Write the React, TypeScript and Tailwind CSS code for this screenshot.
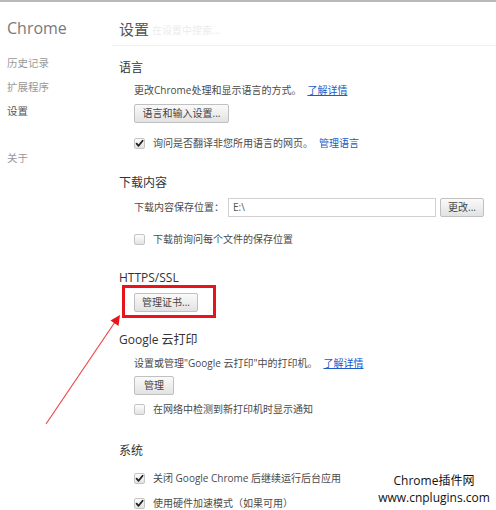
import React from "react";

const font = { fontFamily: '"Open Sans", "Noto Sans CJK SC", sans-serif' };

function Checkbox({ checked }: { checked?: boolean }) {
  return (
    <span className="relative inline-flex h-[11px] w-[11px] shrink-0 items-center justify-center rounded-[2px] border border-[#c4c4c4] bg-gradient-to-b from-[#fdfdfd] to-[#e3e3e3]">
      {checked && (
        <svg width="9" height="9" viewBox="0 0 9 9" className="absolute left-[0px] top-[0px]">
          <path d="M1.6 4.6 L3.6 6.8 L7.6 1.8" fill="none" stroke="#222" strokeWidth="1.8" strokeLinecap="round" strokeLinejoin="round" />
        </svg>
      )}
    </span>
  );
}

function Btn({ children, className = "" }: { children: React.ReactNode; className?: string }) {
  return (
    <div
      className={
        "flex h-[19px] items-center justify-center rounded-[2px] border border-[#c0c0c0] bg-gradient-to-b from-[#fafafa] to-[#e2e2e2] text-[10px] text-[#444] " +
        className
      }
    >
      {children}
    </div>
  );
}

function Title({ children, className = "" }: { children: React.ReactNode; className?: string }) {
  return <div className={"h-[16px] text-[12px] leading-[16px] text-[#333] " + className}>{children}</div>;
}

function CheckRow({ checked, children, className = "" }: { checked?: boolean; children: React.ReactNode; className?: string }) {
  return (
    <div className={"flex h-[18px] items-center gap-[8px] pl-[15px] text-[10px] text-[#4a4a4a] " + className}>
      <Checkbox checked={checked} />
      <span>{children}</span>
    </div>
  );
}

export default function App() {
  return (
    <div className="relative h-[510px] w-[496px] overflow-hidden bg-white" style={font}>
      <div className="h-[2px] bg-[#b8b8b8]" />
      <div className="flex">
        {/* sidebar */}
        <div className="w-[112px] shrink-0 pl-[7px]">
          <div className="mt-[15px] h-[22px] text-[16px] leading-[22px] text-[#7a7a7a]">Chrome</div>
          <div className="mt-[15px] h-[18px] text-[10.5px] leading-[18px] text-[#999]">历史记录</div>
          <div className="mt-[6px] h-[18px] text-[10.5px] leading-[18px] text-[#999]">扩展程序</div>
          <div className="mt-[6px] h-[18px] text-[10.5px] leading-[18px] text-[#555]">设置</div>
          <div className="mt-[29px] h-[18px] text-[10.5px] leading-[18px] text-[#999]">关于</div>
        </div>
        {/* main */}
        <div className="flex-1">
          <div className="flex h-[44px] items-start border-b border-[#efefef] pl-[7px] pt-[17px]">
            <span className="text-[15px] leading-[20px] text-[#555]">设置</span>
            <span className="ml-[3px] mt-[4px] text-[10px] leading-[14px] text-[#ececec]">在设置中搜索...</span>
          </div>
          <div className="pl-[7px]">
            <Title className="mt-[14px]">语言</Title>
            <div className="mt-[5px] flex h-[18px] items-center pl-[15px] text-[10px] text-[#4a4a4a]">
              <span>更改Chrome处理和显示语言的方式。</span>
              <span className="ml-[6px] text-[#2159c9] underline">了解详情</span>
            </div>
            <div className="mt-[5px] pl-[15px]">
              <Btn className="w-[95px]">语言和输入设置...</Btn>
            </div>
            <CheckRow checked className="mt-[11px]">
              询问是否翻译非您所用语言的网页。<span className="ml-[6px] text-[#2159c9]">管理语言</span>
            </CheckRow>

            <Title className="mt-[23px]">下载内容</Title>
            <div className="mt-[7px] flex h-[19px] items-center pl-[15px] text-[10px] text-[#4a4a4a]">
              <span className="w-[94px]">下载内容保存位置：</span>
              <div className="flex h-[19px] w-[208px] items-center border border-[#d0d0d0] pl-[4px] text-[10px] text-[#555]">E:\</div>
              <Btn className="ml-[4px] w-[44px]">更改...</Btn>
            </div>
            <CheckRow className="mt-[13px]">下载前询问每个文件的保存位置</CheckRow>

            <Title className="mt-[22px]">HTTPS/SSL</Title>
            <div className="mt-[7px] pl-[15px]">
              <div className="relative w-[64px]">
                <Btn className="w-[64px]">管理证书...</Btn>
                <div className="absolute left-[-12px] top-[-8px] h-[33px] w-[94px] border-[3px] border-[#e8141c]" />
              </div>
            </div>

            <Title className="mt-[20px]">Google 云打印</Title>
            <div className="mt-[6px] flex h-[18px] items-center pl-[15px] text-[10px] text-[#4a4a4a]">
              <span>设置或管理"Google 云打印"中的打印机。</span>
              <span className="ml-[6px] text-[#2159c9] underline">了解详情</span>
            </div>
            <div className="mt-[4px] pl-[15px]">
              <Btn className="w-[40px]">管理</Btn>
            </div>
            <CheckRow className="mt-[5px]">在网络中检测到新打印机时显示通知</CheckRow>

            <Title className="mt-[25px]">系统</Title>
            <CheckRow checked className="mt-[10px]">关闭 Google Chrome 后继续运行后台应用</CheckRow>
            <CheckRow checked className="mt-[7px]">使用硬件加速模式（如果可用）</CheckRow>
          </div>
        </div>
      </div>

      {/* arrow */}
      <svg className="absolute left-0 top-0" width="496" height="510" viewBox="0 0 496 510">
        <line x1="46" y1="424" x2="115" y2="322" stroke="#f04848" strokeWidth="1.2" />
        <polygon points="120,315 118.5,326 110.5,320.5" fill="#e8141c" />
      </svg>

      {/* watermark */}
      <div className="absolute right-[2px] top-[472px] w-[120px] text-center text-[12px] leading-[17px] text-[#111]">
        <div>Chrome插件网</div>
        <div>www.cnplugins.com</div>
      </div>
    </div>
  );
}
